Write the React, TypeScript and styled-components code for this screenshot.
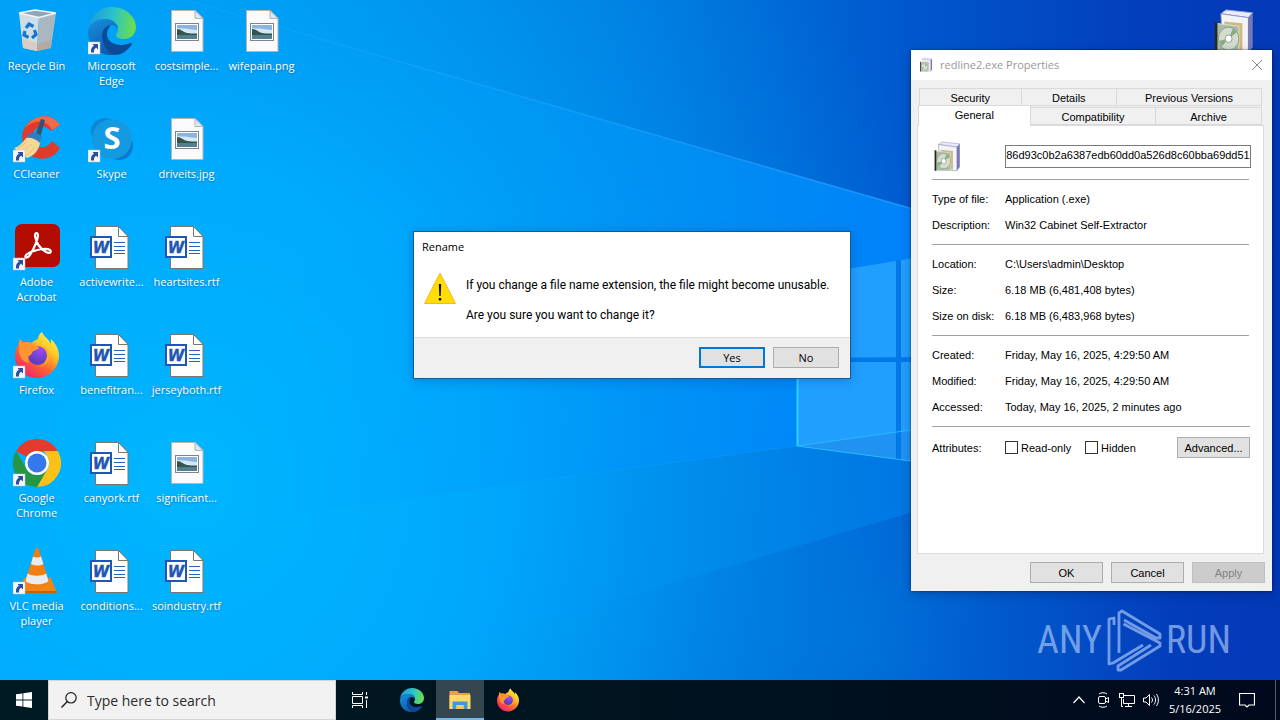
import React from "react";
import styled, { createGlobalStyle, css } from "styled-components";

const UI = '"Open Sans", "Noto Sans", sans-serif';
const CLASSIC = '"Liberation Sans", Arial, sans-serif';

const GlobalStyle = createGlobalStyle`
  * { box-sizing: border-box; }
  body { margin: 0; font-family: ${UI}; font-size: 11px; }
  button, input { font: inherit; margin: 0; }
  svg { flex-shrink: 0; }
`;

const Screen = styled.div`
  min-height: 100vh;
  display: flex;
  flex-direction: column;
  overflow: hidden;
`;

const Desktop = styled.main`
  position: relative;
  flex: 1;
  isolation: isolate;
`;

const WallpaperSvg = styled.svg`
  position: absolute;
  inset: 0;
  width: 100%;
  height: 100%;
  z-index: -1;
`;

const IconGrid = styled.ul`
  display: grid;
  grid-auto-flow: column;
  grid-template-rows: repeat(6, 108px);
  grid-auto-columns: 75px;
  margin: 0;
  padding: 0;
  list-style: none;
`;

const IconCell = styled.li`
  display: flex;
  flex-direction: column;
  align-items: center;
  gap: 3px;
  padding: 7px 2px 0 0;
`;

const IconLabel = styled.span`
  color: #fff;
  line-height: 15px;
  text-align: center;
  white-space: pre;
  text-shadow: 0 1px 2px rgba(0, 40, 90, 0.45);
`;

const LooseIcon = styled.div`
  position: absolute;
  top: 7px;
  right: 21px;
`;

const Watermark = styled.div`
  position: absolute;
  right: 49px;
  bottom: 8px;
  display: flex;
  align-items: center;
  gap: 3px;
  color: rgba(190, 215, 255, 0.6);
  font-family: "Liberation Sans Narrow", "Roboto Condensed", "Liberation Sans", sans-serif;
  font-size: 38px;
  line-height: 64px;
`;

const Dialog = styled.section`
  position: absolute;
  top: 231px;
  left: 413px;
  width: 438px;
  border: 1px solid #135a94;
  background: #fff;
  color: #000;
  box-shadow: 0 2px 10px rgba(0, 30, 90, 0.25);
`;

const DialogTitle = styled.h1`
  margin: 0;
  padding: 0 8px;
  font-size: 11px;
  font-weight: 400;
  line-height: 30px;
`;

const DialogBody = styled.div`
  display: flex;
  gap: 10px;
  padding: 10px 10px 14px;
`;

const DialogText = styled.div`
  padding-top: 6px;
  font-family: Roboto, "Open Sans", sans-serif;
  font-size: 12px;
  line-height: 15px;
  white-space: nowrap;
  p { margin: 0 0 15px; }
  p:last-child { margin: 0; }
`;

const DialogFooter = styled.footer`
  display: flex;
  justify-content: flex-end;
  gap: 8px;
  padding: 9px 11px 10px;
  border-top: 1px solid #dfdfdf;
  background: #f0f0f0;
`;

const PushButton = styled.button<{ $width: number; $primary?: boolean }>`
  width: ${(p) => p.$width}px;
  height: 21px;
  padding: 0;
  border: 1px solid #adadad;
  background: #e1e1e1;
  color: #000;
  line-height: 18px;
  ${(p) => p.$primary && css`
    border: 2px solid #0078d7;
    line-height: 16px;
  `}
  &:disabled {
    border-color: #bfbfbf;
    background: #ccc;
    color: #838383;
  }
`;

const PropertiesWindow = styled.section`
  position: absolute;
  top: 50px;
  right: 8px;
  width: 361px;
  background: #f0f0f0;
  color: #000;
  font-family: ${CLASSIC};
  box-shadow: 0 0 2px rgba(0, 0, 0, 0.6), 0 3px 10px rgba(0, 10, 60, 0.25);
`;

const TitleBar = styled.header`
  display: flex;
  align-items: center;
  gap: 6px;
  height: 30px;
  padding: 0 8px 1px;
  background: #fff;
  color: #999;
  font-family: ${UI};
`;

const WindowTitle = styled.h1`
  flex: 1;
  margin: 0;
  font-size: 11px;
  font-weight: 400;
`;

const CloseButton = styled.button`
  display: flex;
  padding: 0;
  border: 0;
  background: none;
  color: #888;
`;

const Tabs = styled.div`
  padding: 9px 8px 0 6px;
`;

const TabRow = styled.div<{ $front?: boolean }>`
  display: flex;
  align-items: flex-end;
  height: ${(p) => (p.$front ? 20 : 17)}px;
  margin: ${(p) => (p.$front ? "-1px 2px 0 1px" : "0 2px")};
`;

const Tab = styled.button<{ $grow: number; $active?: boolean }>`
  flex: ${(p) => p.$grow} 1 0;
  height: 18px;
  padding: 2px 0 0;
  border: 1px solid #d9d9d9;
  border-left-width: 0;
  background: #f0f0f0;
  color: #000;
  line-height: 14px;
  &:first-child { border-left-width: 1px; }
  ${(p) => p.$active && css`
    position: relative;
    height: 21px;
    margin-bottom: -1px;
    padding: 0 0 2px;
    border-bottom: 0;
    background: #fff;
    line-height: 18px;
  `}
`;

const Panel = styled.div`
  min-height: 429px;
  margin: 0 8px 0 6px;
  border: 1px solid #dcdcdc;
  background: #fff;
`;

const FileHead = styled.div`
  display: grid;
  grid-template-columns: 73px 1fr;
  align-items: center;
  height: 53px;
  margin: 0 12px 0 14px;
  padding-top: 7px;
`;

const NameInput = styled.input`
  width: 100%;
  height: 23px;
  padding: 0 0 3px;
  border: 1px solid #7a7a7a;
  background: #fff;
  color: #000;
  text-align: center;
`;

const Facts = styled.dl`
  margin: 0 14px;
  padding: 6px 0;
  border-top: 1px solid #a0a0a0;
`;

const Fact = styled.div`
  display: grid;
  grid-template-columns: 73px 1fr;
  line-height: 26px;
  dd { margin: 0; }
`;

const Attributes = styled.div`
  display: grid;
  grid-template-columns: 73px 80px 1fr 73px;
  align-items: center;
  margin: 0 13px 0 14px;
  border-top: 1px solid #a0a0a0;
  padding-top: 10px;
`;

const CheckLabel = styled.label`
  display: flex;
  align-items: center;
  gap: 3px;
`;

const Checkbox = styled.input`
  appearance: none;
  width: 13px;
  height: 13px;
  border: 1px solid #333;
  background: #fff;
`;

const WindowFooter = styled.footer`
  display: flex;
  justify-content: flex-end;
  gap: 8px;
  padding: 8px 7px;
`;

const Taskbar = styled.nav`
  display: flex;
  height: 40px;
  background: linear-gradient(90deg, #001a23, #00131f 50%, #000a1e);
  color: #fff;
`;

const TaskButton = styled.button<{ $active?: boolean }>`
  display: flex;
  align-items: center;
  justify-content: center;
  width: 48px;
  padding: 0;
  border: 0;
  background: ${(p) => (p.$active ? "#34474f" : "transparent")};
  box-shadow: ${(p) => (p.$active ? "inset 0 -2px #76b9ed" : "none")};
  color: #fff;
`;

const SearchBox = styled.label`
  display: flex;
  align-items: center;
  gap: 10px;
  width: 288px;
  padding-left: 12px;
  border: 1px solid #d4d4d4;
  background: #f2f2f2;
  color: #1c1c1c;
`;

const SearchInput = styled.input`
  flex: 1;
  min-width: 0;
  padding: 0;
  border: 0;
  background: none;
  font-size: 14px;
  &::placeholder { color: #2b2b2b; opacity: 1; }
`;

const Pinned = styled.div`
  display: flex;
  & > :first-child { width: 52px; padding-right: 4px; }
`;

const Tray = styled.div`
  display: flex;
  align-items: center;
  margin-left: auto;
`;

const TrayButton = styled.button`
  display: flex;
  justify-content: center;
  width: 24px;
  padding: 0;
  border: 0;
  background: none;
  color: #fff;
`;

const Clock = styled.time`
  width: 64px;
  line-height: 18px;
  text-align: center;
`;

const ActionCenter = styled(TrayButton)`
  width: 40px;
`;

const ShowDesktop = styled.button`
  align-self: stretch;
  width: 5px;
  margin-left: 8px;
  padding: 0;
  border: 0;
  border-left: 1px solid #56606c;
  background: none;
`;

function Wallpaper() {
  return (
    <WallpaperSvg viewBox="0 0 1280 680" preserveAspectRatio="none" aria-hidden="true">
      <defs>
        <linearGradient id="w-base" x1="0" x2="1" y1="0" y2="0">
          <stop offset="0" stopColor="#00a4f8" />
          <stop offset="0.23" stopColor="#009bef" />
          <stop offset="0.47" stopColor="#007fe0" />
          <stop offset="0.7" stopColor="#0059ce" />
          <stop offset="0.88" stopColor="#0340bd" />
          <stop offset="1" stopColor="#0338b6" />
        </linearGradient>
        <radialGradient id="w-glow" gradientUnits="userSpaceOnUse" cx="190" cy="480" r="800">
          <stop offset="0" stopColor="#00b6ff" />
          <stop offset="0.4" stopColor="#00acff" stopOpacity="0.85" />
          <stop offset="1" stopColor="#0088ea" stopOpacity="0" />
        </radialGradient>
        <radialGradient id="w-corner" gradientUnits="userSpaceOnUse" cx="860" cy="640" r="320">
          <stop offset="0" stopColor="#0072d8" stopOpacity="0.7" />
          <stop offset="1" stopColor="#0064d0" stopOpacity="0" />
        </radialGradient>
        <linearGradient id="w-beam" gradientUnits="userSpaceOnUse" x1="300" x2="1000" y1="130" y2="280">
          <stop offset="0" stopColor="#00acff" stopOpacity="0" />
          <stop offset="0.4" stopColor="#009cfb" stopOpacity="0.5" />
          <stop offset="0.72" stopColor="#008dfb" stopOpacity="0.85" />
          <stop offset="1" stopColor="#007dff" />
        </linearGradient>
        <linearGradient id="w-low" gradientUnits="userSpaceOnUse" x1="400" x2="950" y1="0" y2="0">
          <stop offset="0" stopColor="#00a8ff" stopOpacity="0" />
          <stop offset="0.6" stopColor="#008fee" stopOpacity="0.5" />
          <stop offset="1" stopColor="#0078e6" stopOpacity="0.8" />
        </linearGradient>
        <linearGradient id="w-line" gradientUnits="userSpaceOnUse" x1="180" x2="930" y1="0" y2="0">
          <stop offset="0" stopColor="#3bb4ff" stopOpacity="0.1" />
          <stop offset="1" stopColor="#2e9dff" stopOpacity="0.7" />
        </linearGradient>
      </defs>
      <rect width="1280" height="680" fill="url(#w-base)" />
      <rect width="1280" height="680" fill="url(#w-corner)" />
      <rect width="1280" height="680" fill="url(#w-glow)" />
      <path d="M185 0 911 208 1000 234V418L797 446 180 530 0 550V0Z" fill="url(#w-beam)" />
      <path d="M250 520 797 446 1000 418V486L600 605 250 700Z" fill="url(#w-low)" />
      <path d="M185 0 1000 234" stroke="url(#w-line)" strokeWidth="1.5" />
      <path d="M200 526 797 446" stroke="url(#w-line)" strokeOpacity="0.4" />
      <path d="M797 277 896 261V357L797 358ZM797 362H896V459L797 446ZM901 260 1000 244V357L901 357ZM901 362H1000V473L901 460Z" fill="#219fff" />
      <path d="M797 446 911 430V461Z" fill="#2093f2" />
      <path d="M896 260h5v200h-5zM797 358h110v4H797z" fill="#0078e8" />
      <path d="M797.5 277V446" stroke="#2cd3ff" strokeWidth="2" fill="none" />
      <path d="M797 446 911 430M797 446 911 461" stroke="#25baff" fill="none" />
    </WallpaperSvg>
  );
}

function Shortcut() {
  return (
    <g>
      <rect x="0" y="35" width="12" height="12" fill="#f5f7fa" stroke="#b9c6d3" strokeWidth=".5" />
      <path d="M4.500 37h5.500v5.500l-1.800-1.800c-1.700 1-2.400 2.400-2.200 4.800H3c-.4-3.600.8-5.400 3-6.900Z" fill="#2a4f9c" />
    </g>
  );
}

function Glyph({ children, size = 48, box = 48 }: { children: React.ReactNode; size?: number; box?: number }) {
  return (
    <svg width={size} height={size} viewBox={`0 0 ${box} ${box}`} fill="none" aria-hidden="true">
      {children}
    </svg>
  );
}

function RecycleBin() {
  return (
    <Glyph>
      <path d="m6 6 20 4-2 34-14-3Z" fill="#cfdde6" />
      <path d="m26 10 17-4-5 35-14 3Z" fill="#a9b7c2" />
      <path d="m9 31 15 5v8l-14-3Z" fill="#d8cdc6" />
      <path d="m24 37 15-4-1.500 8L24 44Z" fill="#b5a9a3" />
      <path d="m6 6 16-3 21 3-17 4.500Z" fill="#8fa6b5" stroke="#eff7fc" strokeWidth="1.300" />
      <g stroke="#1476cf" strokeWidth="3.200">
        <path d="m13 21 3-4 4.500 2.500" />
        <path d="m21.500 23 1.500 4.500-4 3.500" />
        <path d="m15.500 30.500-4.500-2.500 1-4" />
      </g>
    </Glyph>
  );
}

function EdgeArt() {
  return (
    <>
      <defs>
        <linearGradient id="e-top" x1="2" y1="14" x2="46" y2="22" gradientUnits="userSpaceOnUse">
          <stop stopColor="#1b9de2" /><stop offset=".5" stopColor="#2bc3c8" /><stop offset="1" stopColor="#6bdf4a" />
        </linearGradient>
        <linearGradient id="e-low" x1="4" y1="16" x2="24" y2="48" gradientUnits="userSpaceOnUse">
          <stop stopColor="#1789d8" /><stop offset="1" stopColor="#0d55a9" />
        </linearGradient>
      </defs>
      <path d="M0 22C2 8 12 0 24 0c15 0 24 11 24 20 0 7-5 12-12 12-6 0-8-2-8-4 0-1 2-2 2-6 0-5-5-10-13-10C8 12 2 17 0 22Z" fill="url(#e-top)" />
      <path d="M0 23C2 16 9 12 17 12c8 0 13 5 13 10-1-2-4-4-7-4-5 0-9 5-9 12 0 9 6 16 13 18-16 2-28-10-27-25Z" fill="url(#e-low)" />
      <path d="M14 29c0-6 4-11 9-11-2 2-4 5-4 9 0 7 6 11 14 11 5 0 9-2 10-2 1 0 1 1 .5 2C40 43 34 48 27 48c-8-2-13-10-13-19Z" fill="#0a4a97" />
    </>
  );
}

function Edge() {
  return <Glyph><EdgeArt /><Shortcut /></Glyph>;
}

function FirefoxArt() {
  return (
    <>
      <defs>
        <linearGradient id="f-body" x1="42" y1="5" x2="12" y2="44" gradientUnits="userSpaceOnUse">
          <stop stopColor="#fff44f" /><stop offset=".3" stopColor="#ffc928" /><stop offset=".6" stopColor="#ff6d2b" /><stop offset="1" stopColor="#f0246c" />
        </linearGradient>
        <radialGradient id="f-globe" cx="27" cy="18" r="14" gradientUnits="userSpaceOnUse">
          <stop stopColor="#a04bf5" /><stop offset="1" stopColor="#5a3fc0" />
        </radialGradient>
      </defs>
      <path d="M29 1c2 5 7 7 9 12 0-2 0-4-.5-5 5 4 8.500 10 8.500 16.500C46 37 36 47 24 47S2 37.500 2 25c0-5 1.500-9 4-12 0-2 .5-3.500 1.500-5 .5 1.500 1.500 3 3 3.500 3-1 6-.5 7.500.5C22 9 26 8 25 7c1-3 2-5 4-6Z" fill="url(#f-body)" />
      <circle cx="24.500" cy="24.500" r="9.500" fill="url(#f-globe)" />
      <path d="M7.500 8c.5 1.500 1.500 3 3 3.500 3-1 6.500-.5 8.500 1 2 1.300 3.500 3 6 3 1.500 0 1 2-.5 2.800l-4.500 2c-1 .5-.5 2.700-2.500 3.700-3 1-3 5-1 8C9 31 5 25 6 13c0-2 .5-3.500 1.500-5Z" fill="#ff9430" />
      <path d="M30 15c5 2 7 7 6 12-1 6-6 9-12 9 7-1 10-5 10-11 0-4-1-7-4-10Z" fill="#ffae25" />
    </>
  );
}

function Firefox() {
  return <Glyph><FirefoxArt /><Shortcut /></Glyph>;
}

function CCleaner() {
  return (
    <Glyph>
      <path d="M47 10C42 2 32-1 23 3 12 7 7 18 10 28c3 12 14 18 24 15 6-1 10-5 13-10l-8-7c-3 5-8 8-14 5-7-4-7-14-1-18 5-3 11-1 14 3Z" fill="#df3a2b" />
      <path d="M47 10C42 2 32-1 23 3c-5 2-9 6-11 10 8-8 19-9 26 0l1 2Z" fill="#f26a4d" />
      <path d="m28 4 4 1-5 18-5-2Z" fill="#2d5578" />
      <path d="M16 19c4-3 10-1 13 3l-3 6-13-4Z" fill="#2e7dbd" />
      <path d="M13 23c5-1 10 1 14 5-1 7-6 13-13 15L1 33c4-1 9-5 12-10Z" fill="#f6d795" />
      <path d="m5 33 9-6M9 37l10-8M13 41l9-9" stroke="#e9bf78" />
      <Shortcut />
    </Glyph>
  );
}

const SkypeLetter = styled.text`
  font: bold 31px "Open Sans", sans-serif;
  fill: #fff;
`;

function Skype() {
  return (
    <Glyph>
      <circle cx="17" cy="17" r="14" fill="#0d86d4" />
      <circle cx="31" cy="31" r="14" fill="#0a7bd0" />
      <circle cx="24" cy="24" r="20" fill="#149ae0" />
      <SkypeLetter x="24" y="34" textAnchor="middle">S</SkypeLetter>
      <Shortcut />
    </Glyph>
  );
}

function Acrobat() {
  return (
    <Glyph>
      <rect x="2" y="1" width="45" height="43" rx="7" fill="#b30b00" />
      <path d="M13 32c-2 3 1 4 4 0 3-5 7-13 8-19 0-4-3-4-3 0 1 7 6 13 11 16 4 2 6 0 4-2-3-2-11-1-16 1-4 1-7 3-8 4Z" stroke="#fff" strokeWidth="2.200" />
      <Shortcut />
    </Glyph>
  );
}

function Chrome() {
  return (
    <Glyph>
      <path d="M3.200 12A24 24 0 0 1 44.800 12H24A12 12 0 0 0 13.600 18Z" fill="#e33b2e" />
      <path d="M44.800 12A24 24 0 0 1 24 48L34.400 30A12 12 0 0 0 34.400 18L31 12Z" fill="#fbc116" />
      <path d="M24 48A24 24 0 0 1 3.200 12L13.600 30A12 12 0 0 0 34.400 30Z" fill="#269645" />
      <circle cx="24" cy="24" r="12" fill="#fff" />
      <circle cx="24" cy="24" r="9.500" fill="#3478ec" />
      <Shortcut />
    </Glyph>
  );
}

function Vlc() {
  return (
    <Glyph>
      <path d="M11 31h27l6 15H5Z" fill="#f08516" />
      <path d="M5 44h39v2H5Z" fill="#c96304" />
      <path d="M22 3c1-3 3-3 4 0l10 32c-3 6-21 6-24 0Z" fill="#f27d10" />
      <path d="M20 9.500 18 17c4 2 8.500 2 12.500 0L28 9.500c-2.500 1.200-5.500 1.200-8 0ZM14.500 26.500 12.500 34c4 4.500 19 4.500 23 0l-2.300-7.500c-5 3-13.700 3-18.700 0Z" fill="#e9ebed" />
      <Shortcut />
    </Glyph>
  );
}

function PictureFile() {
  return (
    <Glyph>
      <path d="M8.500 3.500H32l8 8v33H8.500Z" fill="#fafafa" stroke="#b7b3ad" />
      <path d="M32 3.500v8h8Z" fill="#d8eaf5" stroke="#b7b3ad" />
      <rect x="12.500" y="16.500" width="23" height="17" fill="#fff" stroke="#7d858c" />
      <path d="M14 18h20v14H14Z" fill="#89b4e2" />
      <path d="M14 21c5 1 8 0 11 1l9 1v4H14Z" fill="#d5e8f3" />
      <path d="M14 22c4 0 6 3 10 4 4 .6 7 .5 10 .5V28H14Z" fill="#33544a" />
      <path d="M14 28h20v4H14Z" fill="#527f92" />
    </Glyph>
  );
}

const WordLetter = styled.text`
  font: italic bold 15px "DejaVu Sans", sans-serif;
  fill: #1f56b5;
  stroke: #1f56b5;
`;

function WordFile() {
  return (
    <Glyph>
      <path d="M7.500 3.500h23l9.500 10v32H7.500Z" fill="#fff" stroke="#7b756f" />
      <path d="M30.500 3.500V13.500H40Z" fill="#fff" stroke="#7b756f" />
      <path d="M26 19.500h11M26 23.500h11M26 27.500h11M26 30.500h11" stroke="#2c62b4" />
      <rect x="3" y="14" width="20" height="20" fill="#fff" stroke="#1f56b5" strokeWidth="2" />
      <WordLetter x="13" y="30" textAnchor="middle" strokeWidth=".4">W</WordLetter>
    </Glyph>
  );
}

function Installer({ size }: { size: number }) {
  return (
    <Glyph size={size}>
      <g transform="translate(3 1) scale(.86 .96)">
        <path d="m8 6 6-4 31 3-5 5Z" fill="#e9ebff" stroke="#9b9dd0" />
        <path d="M8 6 40 10v37l-30-1Z" fill="#f3f4fa" stroke="#8c8fb4" />
        <path d="m40 10 5-5v36l-5 6Z" fill="#7778b8" />
        <path d="m12 14 21 2v29H12Z" fill="#d3b87a" />
        <path d="m2 16 27 3v28H2Z" fill="#a9bba6" stroke="#dfe3db" />
        <path d="M1 15h3v32H1Z" fill="#23291f" />
        <circle cx="17" cy="32" r="12" fill="#d3dccf" stroke="#8b9c88" />
        <path d="m17 32 5-11 5 4ZM17 32 9 40l-3-6Z" fill="#86ad82" />
        <circle cx="17" cy="32" r="4" fill="#fff" stroke="#8c958b" />
      </g>
    </Glyph>
  );
}

const desktopItems: { label: string; Icon: () => React.ReactElement }[] = [
  { label: "Recycle Bin", Icon: RecycleBin },
  { label: "CCleaner", Icon: CCleaner },
  { label: "Adobe\nAcrobat", Icon: Acrobat },
  { label: "Firefox", Icon: Firefox },
  { label: "Google\nChrome", Icon: Chrome },
  { label: "VLC media\nplayer", Icon: Vlc },
  { label: "Microsoft\nEdge", Icon: Edge },
  { label: "Skype", Icon: Skype },
  { label: "activewrite...", Icon: WordFile },
  { label: "benefitran...", Icon: WordFile },
  { label: "canyork.rtf", Icon: WordFile },
  { label: "conditions...", Icon: WordFile },
  { label: "costsimple...", Icon: PictureFile },
  { label: "driveits.jpg", Icon: PictureFile },
  { label: "heartsites.rtf", Icon: WordFile },
  { label: "jerseyboth.rtf", Icon: WordFile },
  { label: "significant...", Icon: PictureFile },
  { label: "soindustry.rtf", Icon: WordFile },
  { label: "wifepain.png", Icon: PictureFile },
];

const factGroups: [string, string][][] = [
  [
    ["Type of file:", "Application (.exe)"],
    ["Description:", "Win32 Cabinet Self-Extractor"],
  ],
  [
    ["Location:", "C:\\Users\\admin\\Desktop"],
    ["Size:", "6.18 MB (6,481,408 bytes)"],
    ["Size on disk:", "6.18 MB (6,483,968 bytes)"],
  ],
  [
    ["Created:", "Friday, May 16, 2025, 4:29:50 AM"],
    ["Modified:", "Friday, May 16, 2025, 4:29:50 AM"],
    ["Accessed:", "Today, May 16, 2025, 2 minutes ago"],
  ],
];

function Properties() {
  return (
    <PropertiesWindow aria-label="redline2.exe Properties">
      <TitleBar>
        <Installer size={15} />
        <WindowTitle>redline2.exe Properties</WindowTitle>
        <CloseButton aria-label="Close">
          <Glyph size={14} box={14}><path d="m2 2 10 10M12 2 2 12" stroke="currentColor" /></Glyph>
        </CloseButton>
      </TitleBar>
      <Tabs role="tablist">
        <TabRow>
          <Tab role="tab" $grow={102}>Security</Tab>
          <Tab role="tab" $grow={96}>Details</Tab>
          <Tab role="tab" $grow={146}>Previous Versions</Tab>
        </TabRow>
        <TabRow $front>
          <Tab role="tab" aria-selected="true" $grow={112} $active>General</Tab>
          <Tab role="tab" $grow={126}>Compatibility</Tab>
          <Tab role="tab" $grow={106}>Archive</Tab>
        </TabRow>
      </Tabs>
      <Panel role="tabpanel">
        <FileHead>
          <Installer size={32} />
          <NameInput aria-label="File name" defaultValue="86d93c0b2a6387edb60dd0a526d8c60bba69dd51" />
        </FileHead>
        {factGroups.map((group) => (
          <Facts key={group[0][0]}>
            {group.map(([name, value]) => (
              <Fact key={name}><dt>{name}</dt><dd>{value}</dd></Fact>
            ))}
          </Facts>
        ))}
        <Attributes>
          <span>Attributes:</span>
          <CheckLabel><Checkbox type="checkbox" />Read-only</CheckLabel>
          <CheckLabel><Checkbox type="checkbox" />Hidden</CheckLabel>
          <PushButton $width={73}>Advanced...</PushButton>
        </Attributes>
      </Panel>
      <WindowFooter>
        <PushButton $width={73}>OK</PushButton>
        <PushButton $width={73}>Cancel</PushButton>
        <PushButton $width={73} disabled>Apply</PushButton>
      </WindowFooter>
    </PropertiesWindow>
  );
}

function RenameDialog() {
  return (
    <Dialog role="alertdialog" aria-label="Rename">
      <DialogTitle>Rename</DialogTitle>
      <DialogBody>
        <Glyph size={32} box={32}>
          <path d="M16 1 31.500 31.500H.5Z" fill="#ffdd05" stroke="#efb92c" />
          <path d="M14.800 12h2.400l-.5 12h-1.400ZM14.800 26h2.400v2.500h-2.400Z" fill="#111" />
        </Glyph>
        <DialogText>
          <p>If you change a file name extension, the file might become unusable.</p>
          <p>Are you sure you want to change it?</p>
        </DialogText>
      </DialogBody>
      <DialogFooter>
        <PushButton $width={66} $primary>Yes</PushButton>
        <PushButton $width={66}>No</PushButton>
      </DialogFooter>
    </Dialog>
  );
}

function BottomBar() {
  return (
    <Taskbar>
      <TaskButton aria-label="Start">
        <Glyph size={16} box={16}>
          <path d="M0 2.300 6.500 1.400V7.600H0ZM7.300 1.300 16 0V7.600H7.300ZM0 8.400H6.500v6.200L0 13.700ZM7.300 8.400H16V16L7.300 14.700Z" fill="#fff" />
        </Glyph>
      </TaskButton>
      <SearchBox>
        <Glyph size={16} box={16}>
          <circle cx="10" cy="5.800" r="5.200" stroke="currentColor" strokeWidth="1.200" />
          <path d="M6.300 9.600.5 15.500" stroke="currentColor" strokeWidth="1.400" />
        </Glyph>
        <SearchInput type="text" placeholder="Type here to search" aria-label="Search" />
      </SearchBox>
      <Pinned>
        <TaskButton aria-label="Task View">
          <Glyph size={16} box={16}>
            <path d="M.5 0v2.500h10V0M.5 16v-2.500h10V16M.5 4.500h10v7H.5ZM14.500 0v3M14.500 8v8" stroke="#fff" />
            <path d="M13 4.500h3v2h-3Z" fill="#fff" />
          </Glyph>
        </TaskButton>
        <TaskButton aria-label="Microsoft Edge"><Glyph size={24}><EdgeArt /></Glyph></TaskButton>
        <TaskButton aria-label="File Explorer" $active>
          <Glyph size={24} box={24}>
            <path d="M1.500 3h8l1.500 2h11v16h-20.500Z" fill="#e7a43b" />
            <path d="M1.500 7h21v14h-21Z" fill="#ffd86c" />
            <path d="M4.500 13.500h15V21h-4v-4h-7v4h-4Z" fill="#3e9bd9" />
            <path d="M8.500 17h7v4h-7Z" fill="#f7c95c" />
          </Glyph>
        </TaskButton>
        <TaskButton aria-label="Firefox"><Glyph size={24}><FirefoxArt /></Glyph></TaskButton>
      </Pinned>
      <Tray>
        <TrayButton aria-label="Show hidden icons">
          <Glyph size={16} box={16}><path d="m2.500 11 5.500-6 5.500 6" stroke="#fff" strokeWidth="1.200" /></Glyph>
        </TrayButton>
        <TrayButton aria-label="Meet Now">
          <Glyph size={16} box={16}>
            <path d="M4 2c2-1.700 6-1.700 8 0M4 14c2 1.700 6 1.700 8 0" stroke="#fff" />
            <rect x="3.500" y="4.500" width="7" height="7" rx="1.500" stroke="#fff" />
            <path d="m10.500 7 3-1.500v5l-3-1.500" stroke="#fff" />
          </Glyph>
        </TrayButton>
        <TrayButton aria-label="Network">
          <Glyph size={16} box={16}>
            <path d="M5 3.500h10.500v8h-11V7M6 14.500h7M9.500 11.500v3M2.500 6v8.500H4" stroke="#fff" />
            <rect x=".5" y="1.500" width="4" height="4" stroke="#fff" />
          </Glyph>
        </TrayButton>
        <TrayButton aria-label="Volume">
          <Glyph size={16} box={16}>
            <path d="M.5 6h2.500L6.500 2.500v11L3 10H.5ZM8.500 5.500c1.300 1.500 1.300 3.500 0 5M11 3.500c2 2.700 2 6.300 0 9M13.500 2c2.500 3.500 2.500 8.500 0 12" stroke="#fff" />
          </Glyph>
        </TrayButton>
        <Clock>4:31 AM<br />5/16/2025</Clock>
        <ActionCenter aria-label="Notifications">
          <Glyph size={16} box={16}><path d="M.5 1.500h15v11.500H10L8 15 6 13H.5Z" stroke="#fff" strokeWidth="1.200" /></Glyph>
        </ActionCenter>
        <ShowDesktop aria-label="Show desktop" />
      </Tray>
    </Taskbar>
  );
}

export default function App() {
  return (
    <Screen>
      <GlobalStyle />
      <Desktop>
        <Wallpaper />
        <IconGrid>
          {desktopItems.map(({ label, Icon }) => (
            <IconCell key={label}>
              <Icon />
              <IconLabel>{label}</IconLabel>
            </IconCell>
          ))}
        </IconGrid>
        <LooseIcon><Installer size={48} /></LooseIcon>
        <Watermark>
          <span>ANY</span>
          <svg width="58" height="64" viewBox="0 0 58 64" fill="none" stroke="currentColor" strokeWidth="2.800" strokeLinejoin="round" aria-hidden="true">
            <path d="M14 45V5L17 3 55 26V30L51 30 19 12M18.500 16 55 35V38L16 62H13V58L46 37" />
            <path d="M9 17V10L4 11V56L8 55 38 37" />
          </svg>
          <span>RUN</span>
        </Watermark>
        <RenameDialog />
        <Properties />
      </Desktop>
      <BottomBar />
    </Screen>
  );
}
